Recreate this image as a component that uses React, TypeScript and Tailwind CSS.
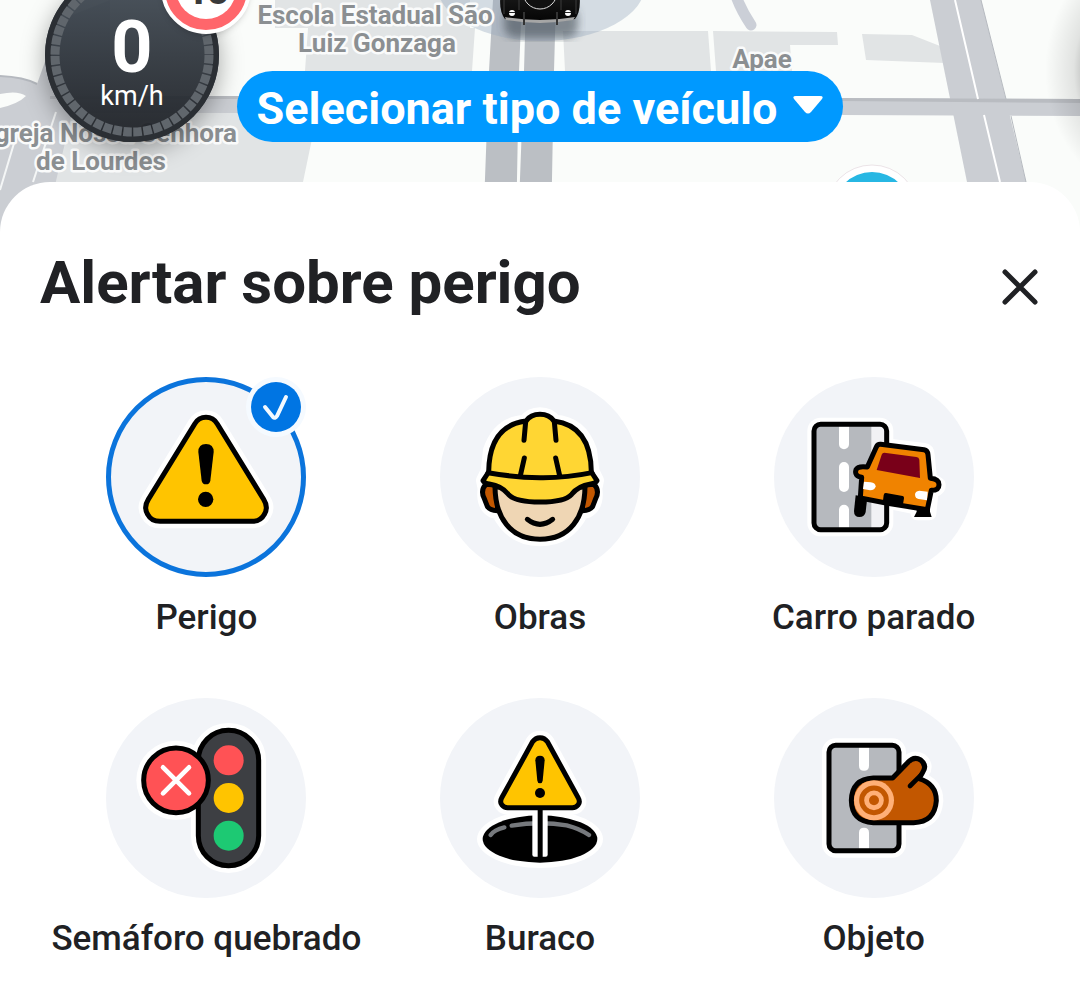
import { useState } from "react";
import type { ReactNode } from "react";

const MapView = () => (
  <svg
    className="absolute inset-0 h-full w-full"
    viewBox="0 0 1080 232"
    preserveAspectRatio="xMidYMin slice"
    aria-hidden="true"
  >
    <defs>
      <radialGradient id="edge-shadow">
        <stop offset="0.6" stopColor="#000" stopOpacity="0.3" />
        <stop offset="0.75" stopColor="#000" stopOpacity="0.1" />
        <stop offset="1" stopColor="#000" stopOpacity="0" />
      </radialGradient>
      <linearGradient id="car-body" x1="0" y1="0" x2="0" y2="1">
        <stop offset="0" stopColor="#1b1b1b" />
        <stop offset="1" stopColor="#050505" />
      </linearGradient>
      <filter id="soft">
        <feGaussianBlur stdDeviation="4" />
      </filter>
    </defs>
    <rect width="1080" height="232" fill="#fafcfa" />

    {/* blocks */}
    <g fill="#e1e4e5">
      <path d="M70 110H318L303 182 300 232H30Z" />
      <path d="M275 0H470V28H475L472 71H305L308 28H275Z" />
      <path d="M563 31H708L711 71H565Z" />
      <path d="M713 31L837 32 838 45H790L792 71H716Z" />
      <path d="M862 34L912 35 940 46 945 63 866 60Z" />
    </g>

    {/* streets */}
    <g fill="#cbced3">
      <path d="M50 96H320V113H50Z" />
      <path d="M0 76Q24 77 37 84L60 20 110 0V110L72 113 44 232H0V108Q18 104 26 96 18 90 0 94Z" />
      <path d="M840 98L1080 99V116L840 115Z" />
      <path d="M930 0H981L1008 108 1026 182 1038 232H978L967 182Z" />
    </g>
    <path d="M840 98L1080 99V103L840 101ZM50 96H320V99H50Z" fill="#b9bcc1" />
    <path d="M955 0L978 99M984 115L1000 182" stroke="#fff" strokeWidth="2" fill="none" />
    <path d="M981 0L1006 99M1011 116L1026 182" stroke="#b5b9bf" strokeWidth="1" fill="none" />
    <path d="M0 190L15 140M33 182L56 112" stroke="#f4f6f6" strokeWidth="2" fill="none" />
    <path d="M0 76Q24 77 37 84" stroke="#b5b9bf" strokeWidth="2" fill="none" />
    <path d="M736 -4Q741 10 751 25" stroke="#cbcfd7" strokeWidth="11" strokeLinecap="round" fill="none" />
    <g fill="#bbbfc4">
      <path d="M493 0H522L519 71 516 232H483L489 71Z" />
      <path d="M526 0H556L554 71 551 232H518L524 71Z" />
    </g>

    {/* own position */}
    <ellipse cx="541" cy="-15" rx="104" ry="56" fill="#96a7bd" fillOpacity="0.38" />
    <rect x="504" y="6" width="74" height="32" rx="12" fill="#39424d" fillOpacity="0.55" filter="url(#soft)" />
    <path d="M501 -8H579Q582 10 575 19L560 21H520L505 19Q498 10 501 -8Z" fill="url(#car-body)" />
    <path d="M505 17Q522 20 540 20T575 17L573 20Q556 23 540 23T506 20Z" fill="#a6a6a6" />
    <circle cx="540" cy="-8" r="17" fill="#111" stroke="#ddd" strokeWidth="1" />
    <circle cx="512" cy="13" r="3" fill="#fff" />
    <circle cx="568" cy="13" r="3" fill="#fff" />
    <path d="M509 12.500H515M565 12.500H571" stroke="#222" strokeWidth="1" />
    <path d="M524 12V25M557 12V25" stroke="#333" strokeWidth="2" />
    <path d="M504 0V14M576 0V14M519 0V10M561 0V10" stroke="#3c3c3c" strokeWidth="1" />

    <circle cx="872" cy="211" r="46" fill="#fff" stroke="#d8c9d0" strokeWidth="0.500" />
    <circle cx="872" cy="211" r="39" fill="#27b7e3" />
    <ellipse cx="1160" cy="70" rx="115" ry="130" fill="url(#edge-shadow)" />

    <g
      className="font-['Roboto',sans-serif] text-[26px] font-bold"
      fill="#8b8f92"
      stroke="#fafbfb"
      strokeWidth="5"
      strokeLinejoin="round"
      paintOrder="stroke"
      textAnchor="middle"
    >
      <text x="375" y="24">Escola Estadual São</text>
      <text x="377" y="52">Luiz Gonzaga</text>
      <text x="762" y="68">Apae</text>
      <text x="112" y="142">Igreja Nossa Senhora</text>
      <text x="101" y="170">de Lourdes</text>
    </g>
  </svg>
);

const Speedometer = () => (
  <div className="absolute -top-8 left-[45px] size-[174px] rounded-full bg-linear-to-b from-[#46505a]/95 to-[#1d2025]/95 text-white shadow-[0_8px_24px_rgba(0,0,0,0.35)]">
    <svg className="absolute inset-0" viewBox="0 0 174 174" aria-hidden="true">
      <circle cx="87" cy="87" r="84" fill="none" stroke="#2b2f34" strokeWidth="6" />
      <circle cx="87" cy="87" r="77" fill="none" stroke="#60666c" strokeWidth="9" strokeDasharray="8.600 1.479" />
    </svg>
    <div className="relative flex flex-col items-center pt-[46px]">
      <span className="text-[72px] leading-[68px] font-bold">0</span>
      <span className="text-[27px] leading-7">km/h</span>
    </div>
    <div className="absolute -top-6 left-[116px] flex size-[90px] items-center justify-center rounded-full border-4 border-white bg-[#ff666b] shadow-md">
      <span className="flex size-[60px] items-center justify-center rounded-full bg-white text-[42px] font-bold text-[#3a3a3a]">
        40
      </span>
    </div>
  </div>
);

const PerigoIcon = () => {
  const shape = "M330 151Q352 151 364 171L503 397Q518 421 505 442 494 463 468 463H192Q166 463 155 442 142 421 157 397L296 171Q308 151 330 151Z";
  return (
    <>
      <path d={shape} fill="#fff" stroke="#fff" strokeWidth="42" />
      <path d={shape} fill="#ffc400" stroke="#000" strokeWidth="15" />
      <path d="M307 255Q307 231 330 231T353 255L343 341Q341 352 330 352T317 341Z" />
      <circle cx="329" cy="397" r="23" />
    </>
  );
};

const ObrasIcon = () => (
  <>
    <path
      d="M330 142Q358 142 374 164 452 168 480 250L487 312 501 340 496 365Q503 414 472 432L455 436Q414 517 330 517T205 436L188 432Q157 414 164 365L159 340 173 312 180 250Q208 168 286 164 302 142 330 142Z"
      fill="#fff"
      stroke="#fff"
      strokeWidth="42"
      strokeLinejoin="round"
    />
    <g stroke="#000" strokeWidth="15" strokeLinecap="round" strokeLinejoin="round">
      <path d="M168 352Q150 370 163 395L172 418Q180 431 202 431L205 355Z" fill="#c25700" />
      <path d="M492 352Q510 370 497 395L488 418Q480 431 458 431L455 355Z" fill="#c25700" />
      <path d="M195 360C196 450 240 517 330 517S464 450 465 360Z" fill="#efd6b4" />
      <path d="M176 315C177 230 210 172 288 162Q302 142 330 142T372 162C450 172 483 230 484 315L501 341Q498 349 482 351 444 357 425 382 405 405 330 405T235 382Q216 357 178 351 162 349 159 341Z" fill="#ffd633" />
      <path d="M174 317Q250 331 330 332T486 317" fill="none" />
      <path d="M287 164L282 220M373 164L378 220M283 273L271 326M377 273L389 326" fill="none" />
      <path d="M292 457Q330 487 368 457" fill="none" />
    </g>
  </>
);

const CarroIcon = () => (
  <>
    <g fill="#fff" stroke="#fff" strokeWidth="40" strokeLinejoin="round">
      <rect x="150" y="172" width="218" height="316" rx="20" />
      <path d="M350 232L480 248Q491 250 492 263L499 335 525 352Q526 370 504 371L497 440H460L458 423 370 405 310 398 300 440H278L292 335Q268 325 278 303L308 298Z" />
    </g>
    <rect x="150" y="172" width="218" height="316" rx="20" fill="#b6b9be" />
    <path d="M322 176H350Q366 180 366 192V468Q366 482 350 484H322Z" fill="#f1f1f4" />
    <g stroke="#fff" strokeWidth="30" strokeLinecap="round">
      <path d="M240 195V232M240 300V360M240 428V465" />
      <path d="M240 178V210M240 450V482" strokeLinecap="butt" />
    </g>
    <rect x="150" y="172" width="218" height="316" rx="20" fill="none" stroke="#000" strokeWidth="15" />
    <path d="M275 385L310 390 305 435Q302 450 286 450T270 432Z" />
    <path d="M458 415L498 420V434L503 450H450L458 434Z" />
    <path
      d="M350 232L480 248Q491 250 492 263L499 334Q525 336 525 353T502 370L490 428 366 408 289 393 293 331Q270 327 276 308 282 296 310 300L337 240Q341 231 350 232Z"
      fill="#f08300"
      stroke="#000"
      strokeWidth="15"
      strokeLinejoin="round"
    />
    <path d="M361 257L457 270Q465 271 466 278L468 333 338 309 353 263Q355 257 361 257Z" fill="#790019" />
    <path d="M300 344L320 346Q334 348 335 358 333 370 318 370L297 366Z" fill="#fff" />
    <path d="M491 374L466 371Q453 373 453 383 454 394 464 396L489 400Z" fill="#fff" />
    <path d="M366 378L416 387Q421 388 420 394L416 418 356 408 359 385Q360 377 366 378Z" />
  </>
);

const SemaforoIcon = () => (
  <>
    <rect x="307" y="127" width="181" height="406" rx="90" fill="#fff" stroke="#fff" strokeWidth="44" />
    <circle cx="240" cy="277" r="119" fill="#fff" />
    <rect x="307" y="127" width="181" height="406" rx="90" fill="#3d3f43" stroke="#000" strokeWidth="15" />
    <circle cx="398" cy="217" r="45" fill="#ff5255" />
    <circle cx="398" cy="330" r="45" fill="#ffc400" />
    <circle cx="398" cy="443" r="45" fill="#1dc973" />
    <circle cx="240" cy="277" r="97" fill="#ff5255" stroke="#000" strokeWidth="15" />
    <path d="M201 238L279 316M279 238L201 316" stroke="#fff" strokeWidth="14" strokeLinecap="round" />
  </>
);

const BuracoIcon = () => {
  const sign = "M330 149Q344 149 352 161L444 328Q452 342 444 351 438 359 427 359H233Q222 359 216 351 208 342 216 328L308 161Q316 149 330 149Z";
  return (
    <>
      <ellipse cx="330" cy="453" rx="189" ry="87" fill="#fff" />
      <path d={sign} fill="#fff" stroke="#fff" strokeWidth="42" />
      <ellipse cx="330" cy="453" rx="172" ry="71" />
      <path d="M182 441Q193 425 223 418M245 413Q330 399 410 412 450 422 477 441" fill="none" stroke="#76797d" strokeWidth="13" strokeLinecap="round" />
      <path d="M307 368H353V500Q353 506 347 506H313Q307 506 307 500Z" fill="#fff" />
      <path d="M323 360H338V510H323Z" />
      <path d={sign} fill="#ffc400" stroke="#000" strokeWidth="15" />
      <path d="M316 217Q316 203 330 203T344 217L338 278Q337 286 330 286T322 278Z" />
      <circle cx="330" cy="315" r="15" />
    </>
  );
};

const ObjetoIcon = () => {
  const log = "M328 270H386L430 225Q449 203 470 216 491 233 475 255L465 272Q517 288 517 338 512 403 449 404H328Q263 401 262 337 264 273 328 270Z";
  return (
    <>
      <g fill="#fff" stroke="#fff" strokeWidth="42" strokeLinejoin="round">
        <rect x="195" y="172" width="210" height="316" rx="20" />
        <path d={log} />
      </g>
      <rect x="195" y="172" width="210" height="316" rx="20" fill="#b6b9be" />
      <path d="M285 178H315V233Q315 248 300 248T285 233ZM285 482V434Q285 419 300 419T315 434V482Z" fill="#fff" />
      <rect x="195" y="172" width="210" height="316" rx="20" fill="none" stroke="#000" strokeWidth="15" />
      <path d={log} fill="#c25700" stroke="#000" strokeWidth="15" strokeLinejoin="round" />
      <path d="M470 262L438 294" stroke="#000" strokeWidth="14" strokeLinecap="round" />
      <circle cx="330" cy="337" r="60" fill="#ffb077" />
      <circle cx="330" cy="337" r="37" fill="none" stroke="#c25700" strokeWidth="15" />
      <circle cx="330" cy="337" r="15" fill="#c25700" />
    </>
  );
};

const hazards: { label: string; icon: ReactNode }[] = [
  { label: "Perigo", icon: <PerigoIcon /> },
  { label: "Obras", icon: <ObrasIcon /> },
  { label: "Carro parado", icon: <CarroIcon /> },
  { label: "Semáforo quebrado", icon: <SemaforoIcon /> },
  { label: "Buraco", icon: <BuracoIcon /> },
  { label: "Objeto", icon: <ObjetoIcon /> }
];

export default function App() {
  const [selected, setSelected] = useState("Perigo");

  return (
    <div className="flex min-h-screen flex-col bg-white font-['Roboto',sans-serif] text-[#202124]">
      <header className="relative flex h-[232px] items-start justify-center overflow-hidden pt-[71px]">
        <MapView />
        <Speedometer />
        <button
          type="button"
          aria-haspopup="listbox"
          className="relative flex h-[71px] items-center gap-4 rounded-full bg-[#0099ff] px-5 pt-1 text-[45px] font-bold text-white"
        >
          Selecionar tipo de veículo
          <svg className="mb-2 h-5 w-[30px]" viewBox="0 0 30 20" fill="currentColor" aria-hidden="true">
            <path d="M3 1H27Q31 1 29 4L18 17Q15 20 12 17L1 4Q-1 1 3 1Z" />
          </svg>
        </button>
      </header>

      <main className="relative -mt-[50px] flex-1 rounded-t-[50px] bg-white px-10 pt-[65px] pb-10">
        <div className="flex items-center justify-between">
          <h1 className="text-[60px] leading-[72px] font-bold">Alertar sobre perigo</h1>
          <button type="button" aria-label="Fechar" className="mt-2">
            <svg className="size-10" viewBox="0 0 40 40" fill="none" aria-hidden="true">
              <path d="M5 5L35 35M35 5L5 35" stroke="currentColor" strokeWidth="5" strokeLinecap="round" />
            </svg>
          </button>
        </div>

        <div className="mt-[58px] grid grid-cols-3 gap-x-px gap-y-[59px]">
          {hazards.map(({ label, icon }) => (
            <button
              key={label}
              type="button"
              aria-pressed={selected === label}
              onClick={() => setSelected(label)}
              className="flex flex-col items-center gap-5"
            >
              <span className="relative size-[200px] rounded-full bg-[#f2f4f8]">
                <svg className="size-full" viewBox="30 30 600 600" aria-hidden="true">
                  {icon}
                </svg>
                {selected === label && (
                  <>
                    <span className="absolute inset-0 rounded-full border-5 border-[#0b74dc]" />
                    <span className="absolute top-[5px] right-[5px] size-[50px] rounded-full bg-[#0075e3] ring-5 ring-[#f5faff]">
                      <svg viewBox="0 0 50 50" fill="none" aria-hidden="true">
                        <path d="M14 25L22 35Q24 37 26 34L35 15" stroke="#f2f9ff" strokeWidth="4" strokeLinecap="round" />
                      </svg>
                    </span>
                  </>
                )}
              </span>
              <span className="text-[35px] leading-[42px] font-medium whitespace-nowrap">{label}</span>
            </button>
          ))}
        </div>
      </main>
    </div>
  );
}
